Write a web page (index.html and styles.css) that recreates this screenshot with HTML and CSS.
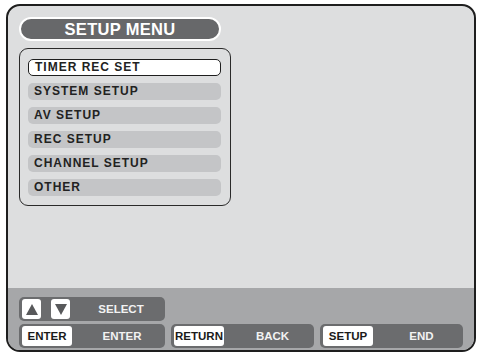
FILE: index.html
```html
<!DOCTYPE html>
<html lang="en">

<head>
    <meta charset="UTF-8">
    <meta name="viewport" content="width=device-width, initial-scale=1.0">
    <title>Setup Menu</title>
    <link rel="stylesheet" href="styles.css">
</head>

<body>

    <div class="screen">
        <div class="main">
            <div class="title">SETUP MENU</div>
            <div class="menu">
                <div class="item on">TIMER REC SET</div>
                <div class="item">SYSTEM SETUP</div>
                <div class="item">AV SETUP</div>
                <div class="item">REC SETUP</div>
                <div class="item">CHANNEL SETUP</div>
                <div class="item">OTHER</div>
            </div>
        </div>
        <div class="guide">
            <div class="row">
                <div class="box">
                    <span class="key arrow"><svg width="12" height="11" viewBox="0 0 12 11"><polygon points="6,0 12,11 0,11" fill="#58595b"/></svg></span>
                    <span class="key arrow"><svg width="12" height="11" viewBox="0 0 12 11"><polygon points="0,0 12,0 6,11" fill="#58595b"/></svg></span>
                    <span class="text">SELECT</span>
                </div>
            </div>
            <div class="row">
                <div class="box">
                    <span class="key">ENTER</span>
                    <span class="text">ENTER</span>
                </div>
                <div class="box">
                    <span class="key">RETURN</span>
                    <span class="text">BACK</span>
                </div>
                <div class="box">
                    <span class="key">SETUP</span>
                    <span class="text">END</span>
                </div>
            </div>
        </div>
    </div>

</body>

</html>
```

FILE: styles.css
```css
/* reset START */
* {
    margin: 0;
    padding: 0;
    box-sizing: border-box;
}

body {
    background: #ffffff;
    font-family: "Liberation Sans", Arial, sans-serif;
    font-weight: bold;
}

/* reset END */

/* screen START */
.screen {
    width: 470px;
    height: 348px;
    margin: 4px 0 0 6px;
    border: 2px solid #1e1e1e;
    border-radius: 14px;
    overflow: hidden;
    background: #dddedf;
    display: flex;
    flex-direction: column;
}

.main {
    flex: 1;
    padding: 11px 0 0 11px;
}

/* screen END */

/* title START */
.title {
    width: 202px;
    height: 24px;
    border: 2px solid #ffffff;
    border-radius: 12px;
    background: #67686a;
    color: #ffffff;
    font-size: 16.5px;
    line-height: 20px;
    text-align: center;
    letter-spacing: 0.3px;
}

/* title END */

/* menu START */
.menu {
    width: 212px;
    margin-top: 7px;
    padding: 10px 0 9px 8px;
    border: 1.5px solid #2a2a2a;
    border-radius: 9px;
    display: flex;
    flex-direction: column;
    gap: 7px;
}

.item {
    width: 193px;
    height: 17px;
    padding-left: 6px;
    border-radius: 5px;
    background: #c4c5c7;
    color: #222222;
    font-size: 12px;
    line-height: 17px;
    letter-spacing: 1px;
}

.item.on {
    background: #ffffff;
    border: 1.5px solid #1e1e1e;
    line-height: 14px;
}

/* menu END */

/* guide START */
.guide {
    height: 62px;
    background: #a6a7a9;
    padding: 9px 0 2px 11px;
    display: flex;
    flex-direction: column;
    gap: 3px;
}

.row {
    display: flex;
    gap: 6px;
}

.box {
    width: 146px;
    height: 24px;
    padding: 2px 3px;
    border-radius: 5px;
    background: #6b6c6e;
    display: flex;
    align-items: center;
    gap: 10px;
}

.box:nth-child(n+2) {
    width: 143px;
}

.key {
    width: 50px;
    height: 20px;
    border-radius: 3px;
    background: #ffffff;
    color: #1a1a1a;
    font-size: 11.5px;
    line-height: 20px;
    text-align: center;
}

.key.arrow {
    width: 19px;
    display: flex;
    align-items: center;
    justify-content: center;
}

.text {
    flex: 1;
    color: #f2f2f2;
    font-size: 11.5px;
    text-align: center;
}

/* guide END */
```
